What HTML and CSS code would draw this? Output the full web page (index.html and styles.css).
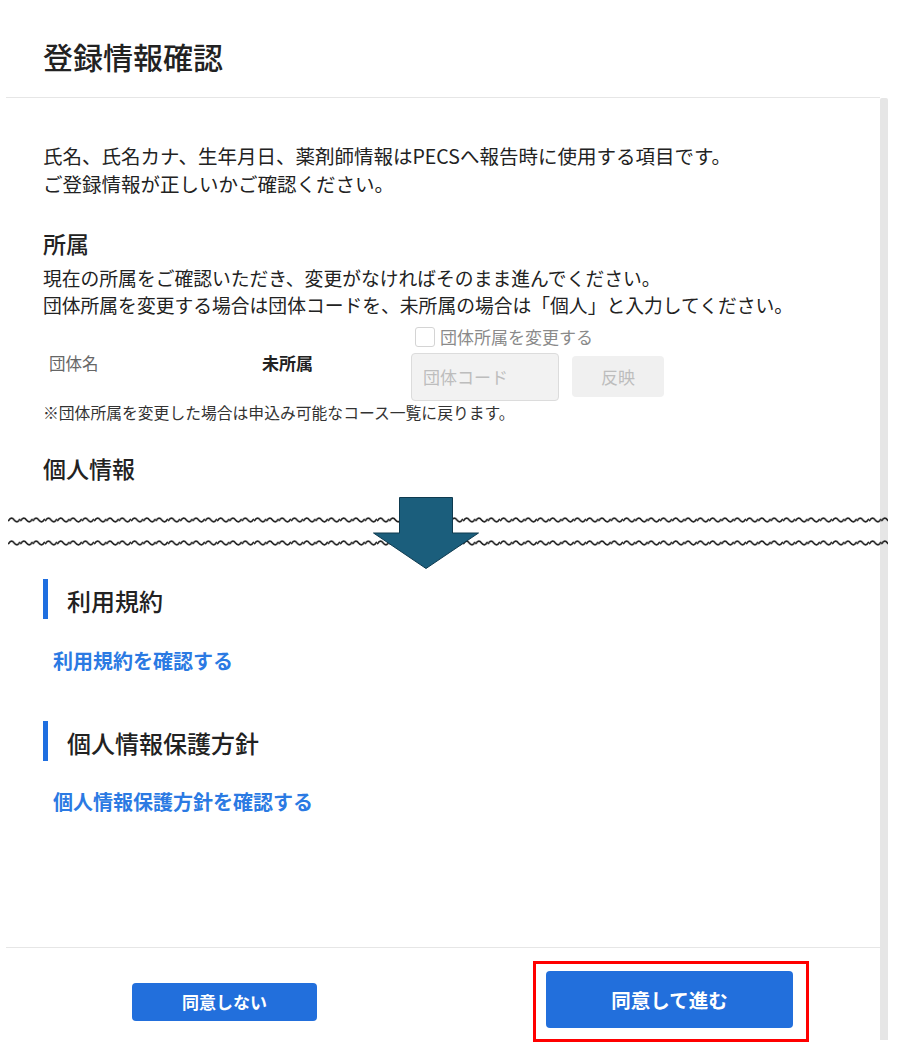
FILE: index.html
```html
<!DOCTYPE html>
<html lang="ja">
<head>
<meta charset="utf-8">
<title>登録情報確認</title>
<link rel="stylesheet" href="styles.css">
</head>
<body>
<div class="modal">
  <header class="modal-header">
    <h1 class="title">登録情報確認</h1>
  </header>
  <div class="modal-main">
    <div class="modal-col">
      <div class="modal-body">
        <p class="lead">氏名、氏名カナ、生年月日、薬剤師情報はPECSへ報告時に使用する項目です。<br>ご登録情報が正しいかご確認ください。</p>

        <h2 class="sub">所属</h2>
        <p class="desc">現在の所属をご確認いただき、変更がなければそのまま進んでください。<br>団体所属を変更する場合は団体コードを、未所属の場合は「個人」と入力してください。</p>

        <div class="org-row">
          <div class="org-label">団体名</div>
          <div class="org-value">未所属</div>
          <div class="org-edit">
            <label class="check"><span class="box"></span>団体所属を変更する</label>
            <div class="code-row">
              <input class="code-input" type="text" placeholder="団体コード" disabled>
              <button class="reflect" type="button" disabled>反映</button>
            </div>
          </div>
        </div>
        <p class="note">※団体所属を変更した場合は申込み可能なコース一覧に戻ります。</p>

        <h2 class="sub sub-personal">個人情報</h2>

        <div class="cut">
          <svg class="wave" viewBox="0 0 880 8" preserveAspectRatio="none">
            <defs>
              <pattern id="w1" width="12.3" height="8" patternUnits="userSpaceOnUse">
                <path d="M0.6 4.6 C2.4 1.4 4.4 1.6 6.15 4 C7.9 6.4 9.9 6.6 11.7 3.4" fill="none" stroke="#222" stroke-width="1.7" stroke-linecap="round"/>
              </pattern>
            </defs>
            <rect width="880" height="8" fill="url(#w1)"/>
          </svg>
          <svg class="wave" viewBox="0 0 880 8" preserveAspectRatio="none">
            <defs>
              <pattern id="w2" width="12.3" height="8" patternUnits="userSpaceOnUse">
                <path d="M0.6 4.6 C2.4 1.4 4.4 1.6 6.15 4 C7.9 6.4 9.9 6.6 11.7 3.4" fill="none" stroke="#222" stroke-width="1.7" stroke-linecap="round"/>
              </pattern>
            </defs>
            <rect width="880" height="8" fill="url(#w2)"/>
          </svg>
          <svg class="arrow" viewBox="0 0 106 72">
            <polygon points="26.5,0.5 79.5,0.5 79.5,36 105.5,36 53,71.5 0.5,36 26.5,36" fill="#1b5e7c" stroke="#0e3a4f" stroke-width="1"/>
          </svg>
        </div>

        <section class="sec">
          <h3 class="sec-title"><span class="bar"></span><span class="sec-text">利用規約</span></h3>
          <a class="link" href="#">利用規約を確認する</a>
        </section>

        <section class="sec sec-second">
          <h3 class="sec-title"><span class="bar"></span><span class="sec-text">個人情報保護方針</span></h3>
          <a class="link link-second" href="#">個人情報保護方針を確認する</a>
        </section>
      </div>

      <footer class="modal-footer">
        <button class="btn btn-decline" type="button">同意しない</button>
        <div class="highlight">
          <button class="btn btn-agree" type="button">同意して進む</button>
        </div>
      </footer>
    </div>
    <div class="scrollbar"></div>
  </div>
</div>
</body>
</html>
```

FILE: styles.css
```css
html, body {
  margin: 0;
  padding: 0;
  background: #fff;
}

body {
  font-family: "Noto Sans CJK JP", "Noto Sans", sans-serif;
  color: #222;
}

.modal {
  margin-left: 6px;
  width: 882px;
}

.modal-header {
  width: 874px;
  box-sizing: border-box;
  padding: 36px 37px 21px;
  border-bottom: 1px solid #e6e6e6;
}

.title {
  margin: 0;
  font-size: 30px;
  line-height: 40px;
  font-weight: 500;
  color: #222;
}

.modal-main {
  display: flex;
  align-items: flex-start;
}

.modal-col {
  width: 874px;
}

.scrollbar {
  width: 8px;
  height: 942px;
  background: #e6e6e6;
  border-radius: 2px 2px 0 0;
}

.modal-body {
  height: 849px;
  box-sizing: border-box;
  padding: 44px 37px 0;
}

.lead {
  margin: 0;
  font-size: 19.5px;
  line-height: 28px;
}

.sub {
  margin: 30px 0 0;
  font-size: 23px;
  line-height: 30px;
  font-weight: 500;
}

.sub-personal {
  margin-top: 29px;
}

.desc {
  margin: 6px 0 0;
  font-size: 18.8px;
  line-height: 27px;
}

.org-row {
  display: flex;
  align-items: center;
  margin-top: 7px;
  padding-left: 6px;
}

.org-label {
  width: 213px;
  font-size: 16.5px;
  line-height: 24px;
  color: #666;
}

.org-value {
  width: 149px;
  font-size: 17px;
  line-height: 24px;
  font-weight: 700;
  color: #222;
}

.org-edit {
  display: flex;
  flex-direction: column;
  gap: 3.5px;
}

.check {
  display: flex;
  align-items: center;
  gap: 5px;
  margin-left: 4px;
  font-size: 17px;
  line-height: 24px;
  color: #8a8a8a;
}

.box {
  width: 18px;
  height: 18px;
  border: 1px solid #d4d4d4;
  border-radius: 3px;
  background: #fff;
}

.code-row {
  display: flex;
  align-items: center;
  gap: 13px;
}

.code-input {
  width: 148px;
  height: 48px;
  box-sizing: border-box;
  margin: 0;
  padding: 0 11px;
  border: 1px solid #dcdcdc;
  border-radius: 4px;
  background: #f2f2f2;
  font-family: "Noto Sans CJK JP", "Noto Sans", sans-serif;
  font-size: 17px;
  color: #bbb;
}

.code-input::placeholder {
  color: #bdbdbd;
}

.reflect {
  width: 92px;
  height: 41px;
  margin: 0;
  padding: 0;
  border: 0;
  border-radius: 4px;
  background: #f0f0f0;
  font-family: "Noto Sans CJK JP", "Noto Sans", sans-serif;
  font-size: 17px;
  color: #bdbdbd;
}

.note {
  margin: 1px 0 0;
  font-size: 15.8px;
  line-height: 22px;
  color: #333;
}

.cut {
  position: relative;
  margin: 33px 0 0 -35px;
  width: 880px;
  display: flex;
  flex-direction: column;
  gap: 15px;
}

.wave {
  display: block;
  width: 880px;
  height: 8px;
}

.arrow {
  position: absolute;
  left: 365px;
  top: -19px;
  width: 106px;
  height: 72px;
}

.sec-title {
  display: flex;
  align-items: flex-start;
  gap: 19px;
  margin: 32px 0 0;
  font-size: 24px;
  font-weight: 500;
  color: #222;
}

.sec-second .sec-title {
  margin-top: 46px;
}

.bar {
  width: 5px;
  height: 40px;
  background: #1f6fe0;
  flex: none;
}

.sec-text {
  padding-top: 2px;
  line-height: 40px;
}

.link {
  display: block;
  margin: 26px 0 0 10px;
  font-size: 20px;
  line-height: 28px;
  font-weight: 700;
  color: #2b7ae3;
  text-decoration: none;
}

.link-second {
  margin-top: 25px;
}

.modal-footer {
  border-top: 1px solid #e6e6e6;
  display: grid;
  grid-template-columns: 1fr 1fr;
  align-items: center;
  padding-top: 13px;
}

.btn {
  margin: 0;
  padding: 0;
  border: 0;
  border-radius: 4px;
  background: #226fdc;
  color: #fff;
  font-family: "Noto Sans CJK JP", "Noto Sans", sans-serif;
  font-weight: 700;
}

.btn-decline {
  justify-self: center;
  width: 185px;
  height: 38px;
  font-size: 17px;
}

.highlight {
  justify-self: center;
  margin-left: 19px;
  border: 3px solid #ff0000;
  padding: 7px 13px 11px 10px;
}

.btn-agree {
  display: block;
  width: 247px;
  height: 57px;
  font-size: 19.5px;
}
```
